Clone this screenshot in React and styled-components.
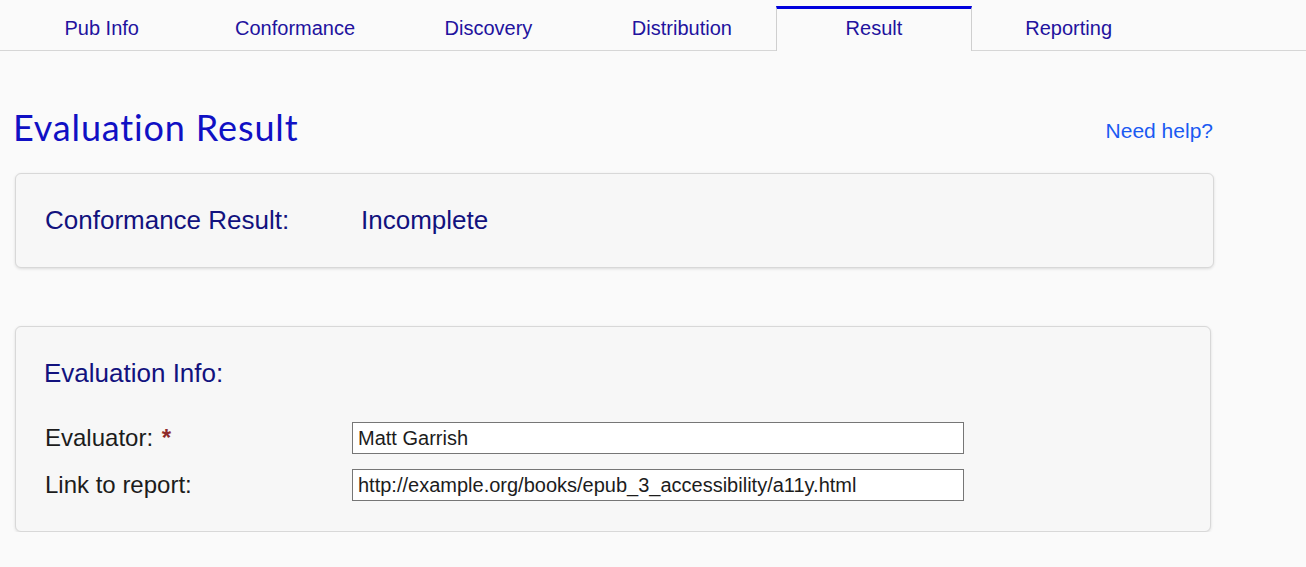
import React from "react";
import styled, { createGlobalStyle } from "styled-components";

const Global = createGlobalStyle`
  html, body { margin: 0; padding: 0; background: #fafafa; }
  body { font-family: "Liberation Sans", Arial, sans-serif; }
  * { box-sizing: border-box; }
`;

const Nav = styled.nav`
  height: 51px;
  border-bottom: 1px solid #d6d6d6;
  display: flex;
  align-items: flex-end;
  padding-left: 5px;
`;

const TabList = styled.ul`
  display: flex;
  list-style: none;
  margin: 0 0 -1px 0;
  padding: 0;
`;

const Tab = styled.li`
  width: ${(p) => (p.$active ? "196px" : "193.4px")};
  margin: ${(p) => (p.$active ? "0 0 0 -2.6px" : "0")};
  height: 45px;
  display: flex;
  align-items: center;
  justify-content: center;
  font-size: 20px;
  color: #22129e;
  padding-bottom: 4px;
  background: ${(p) => (p.$active ? "#fafafa" : "transparent")};
  border-top: 3px solid ${(p) => (p.$active ? "#0000dd" : "transparent")};
  border-left: 1px solid ${(p) => (p.$active ? "#cfcfcf" : "transparent")};
  border-right: 1px solid ${(p) => (p.$active ? "#cfcfcf" : "transparent")};
`;

const Main = styled.main`
  padding: 0 15px;
`;

const HeaderRow = styled.div`
  display: flex;
  align-items: center;
  justify-content: space-between;
  width: 1199px;
  margin-top: 54px;
`;

const Title = styled.h1`
  margin: 0 0 0 -2px;
  font-family: Lato, "Open Sans", sans-serif;
  font-weight: 400;
  font-size: 36px;
  letter-spacing: 0.85px;
  line-height: 44px;
  color: #1010c4;
`;

const HelpLink = styled.a`
  font-size: 21px;
  color: #1a5af2;
  text-decoration: none;
  margin-top: 8px;
  margin-right: 1px;
`;

const Card = styled.section`
  width: ${(p) => p.$width}px;
  margin-top: ${(p) => p.$mt}px;
  background: #f7f7f7;
  border: 1px solid #d8d8d8;
  border-radius: 6px;
  box-shadow: 0 1px 3px rgba(0, 0, 0, 0.12);
  padding: ${(p) => p.$pad};
`;

const ResultRow = styled.div`
  display: grid;
  grid-template-columns: 316px auto;
  align-items: center;
  height: 93px;
  font-size: 26px;
  color: #12127e;
`;

const SectionTitle = styled.h2`
  margin: 0 0 34px -1px;
  font-weight: 400;
  font-size: 26px;
  line-height: 30px;
  color: #12127e;
`;

const Form = styled.div`
  display: grid;
  grid-template-columns: 307px 612px;
  row-gap: 15px;
  align-items: center;
`;

const Label = styled.label`
  font-size: 24px;
  color: #1c1c1c;
`;

const Required = styled.span`
  color: #8e2a2a;
  font-weight: bold;
  margin-left: 2px;
`;

const Input = styled.input`
  height: 32px;
  width: 612px;
  border: 1px solid #767676;
  background: #fff;
  font-family: "Liberation Sans", Arial, sans-serif;
  font-size: 20px;
  color: #1c1c1c;
  padding: 0 5px;
  margin: 0;
  outline: none;
`;

const tabs = ["Pub Info", "Conformance", "Discovery", "Distribution", "Result", "Reporting"];

export default function App() {
  return (
    <>
      <Global />
      <Nav>
        <TabList>
          {tabs.map((t) => (
            <Tab key={t} $active={t === "Result"}>
              {t}
            </Tab>
          ))}
        </TabList>
      </Nav>
      <Main>
        <HeaderRow>
          <Title>Evaluation Result</Title>
          <HelpLink href="#">Need help?</HelpLink>
        </HeaderRow>
        <Card $width={1199} $mt={24} $pad="0 29px">
          <ResultRow>
            <span>Conformance Result:</span>
            <span>Incomplete</span>
          </ResultRow>
        </Card>
        <Card $width={1196} $mt={58} $pad="31px 29px 30px">
          <SectionTitle>Evaluation Info:</SectionTitle>
          <Form>
            <Label htmlFor="evaluator">
              Evaluator: <Required>*</Required>
            </Label>
            <Input id="evaluator" defaultValue="Matt Garrish" />
            <Label htmlFor="report">Link to report:</Label>
            <Input id="report" defaultValue="http://example.org/books/epub_3_accessibility/a11y.html" />
          </Form>
        </Card>
      </Main>
    </>
  );
}
